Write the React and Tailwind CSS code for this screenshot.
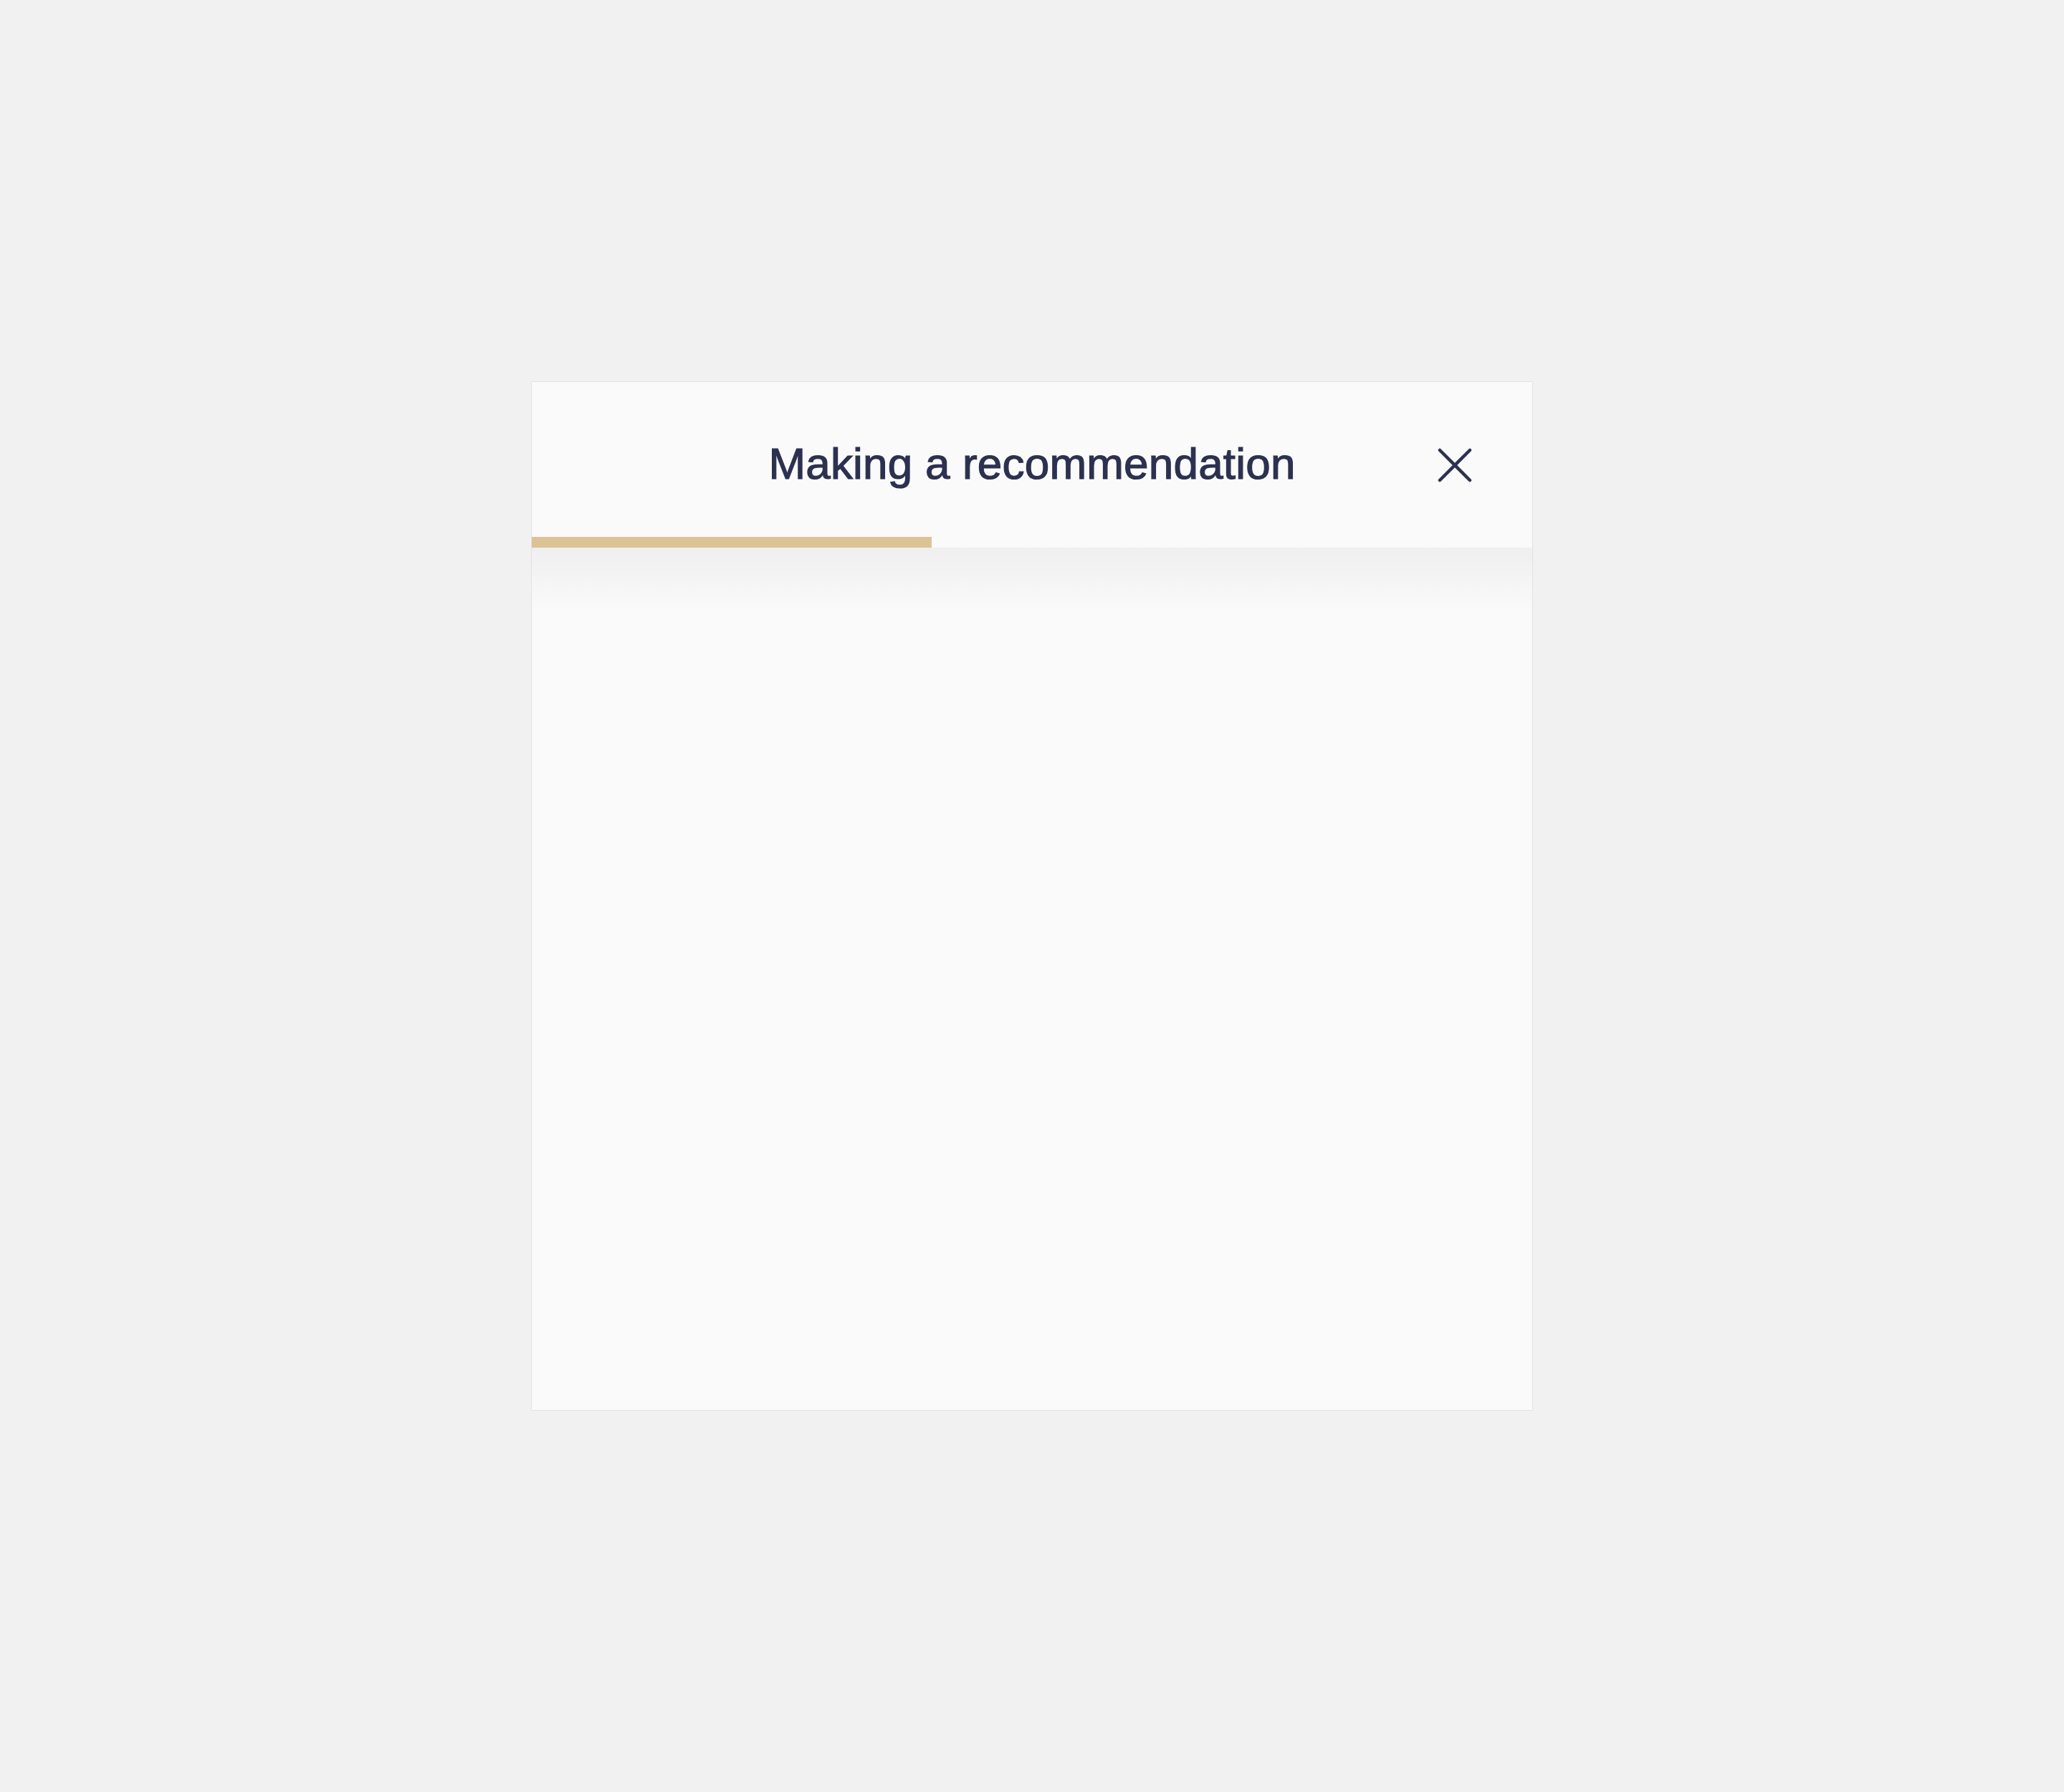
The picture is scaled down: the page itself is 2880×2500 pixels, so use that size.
export default function App() {
  const progress = 40;

  return (
    <div className="min-h-screen flex items-center justify-center bg-[#f1f1f1]">
      <div className="w-[1398px] h-[1436px] bg-[#fafafa] border border-[#e2e2e2] flex flex-col">
        {/* Header */}
        <div className="relative">
          <div className="h-[216px] pt-3 flex items-center justify-center">
            <h1 className="text-[62px] leading-none text-[#2c3150] font-['Liberation_Sans',Arial,sans-serif] tracking-[0.2px] [-webkit-text-stroke:1.2px_#2c3150]">
              Making a recommendation
            </h1>
          </div>
          <button className="absolute top-[92px] right-[84px] w-[48px] h-[48px] text-[#2c3150]">
            <svg viewBox="0 0 48 48" className="w-full h-full" fill="none" stroke="currentColor" strokeWidth="4.5" strokeLinecap="round">
              <line x1="3" y1="3" x2="45" y2="45" />
              <line x1="45" y1="3" x2="3" y2="45" />
            </svg>
          </button>
          <div className="h-[15px] bg-[#fafafa]">
            <div className="h-full bg-[#dcc396]" style={{ width: `${progress}%` }} />
          </div>
        </div>

        {/* Body */}
        <div className="flex-1 flex flex-col">
          <div className="h-[90px] bg-gradient-to-b from-[#efefef] to-[#fafafa]" />
        </div>
      </div>
    </div>
  );
}
